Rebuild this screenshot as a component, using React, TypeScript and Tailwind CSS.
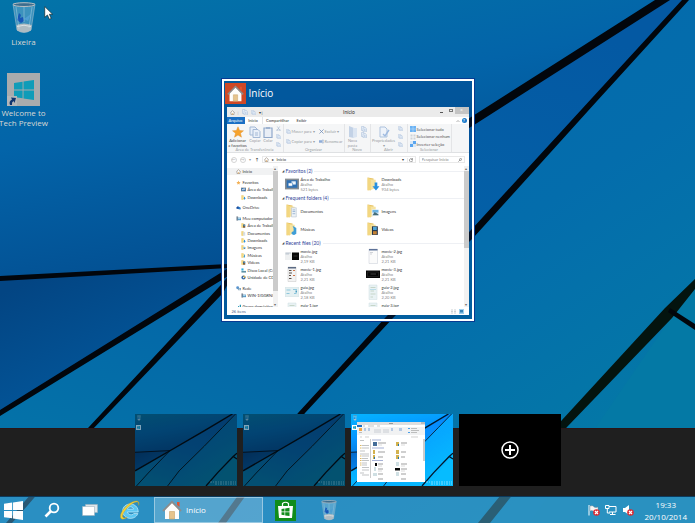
import { useId, useState } from 'react';
import type { ReactNode } from 'react';
import clsx from 'clsx';

type Kind = 'desktop' | 'downloads' | 'documents' | 'images' | 'music' | 'videos';

function Wallpaper({ className, thin }: { className?: string; thin?: boolean }) {
  const id = useId();
  return (
    <svg viewBox="0 0 695 523" preserveAspectRatio="none" aria-hidden="true" className={clsx('absolute inset-0 h-full w-full', className)}>
      <defs>
        <linearGradient id={`${id}a`} x1="0" y1="0" x2="0.45" y2="1">
          <stop offset="0" stopColor="#0374a8" />
          <stop offset="0.45" stopColor="#0364a9" />
          <stop offset="1" stopColor="#034c8e" />
        </linearGradient>
        <linearGradient id={`${id}b`} x1="0" y1="0.2" x2="0.6" y2="1">
          <stop offset="0" stopColor="#034583" />
          <stop offset="1" stopColor="#035ba0" />
        </linearGradient>
        <linearGradient id={`${id}c`} x1="0.7" y1="0" x2="0.3" y2="1">
          <stop offset="0" stopColor="#0459a3" />
          <stop offset="0.5" stopColor="#0462a8" />
          <stop offset="1" stopColor="#0474a8" />
        </linearGradient>
        <linearGradient id={`${id}d`} x1="0.2" y1="0" x2="0.8" y2="1">
          <stop offset="0" stopColor="#0468ac" />
          <stop offset="0.5" stopColor="#046dac" />
          <stop offset="1" stopColor="#047ba5" />
        </linearGradient>
      </defs>
      <path d="M0 0H665L222 275L0 278Z" fill={`url(#${id}a)`} />
      <path d="M0 278L235 264L0 414Z" fill={`url(#${id}b)`} />
      <path d="M0 414L238 264L665 0H685L301 413L227 523H0Z" fill={`url(#${id}c)`} />
      <path d="M685 0H695V523H222L301 413Z" fill={`url(#${id}d)`} />
      <path d="M695 283L530 523H695Z" fill="#0479a5" />
      {thin ? (
        <g fill="none" stroke="#03101c">
          <path d="M664 0L471 122L238 267L0 413" strokeWidth="10" />
          <path d="M685 0L594 100L472 234L301 413L222 523M0 278L238 266L90 429L10 523" strokeWidth="6" />
          <path d="M695 284L669 309L565 424L484 523M669 309L695 327" strokeWidth="9" />
        </g>
      ) : (
        <g fill="#02060c">
          <path d="M655 0H670L474 125L238 270L0 416V410L222 272L468 119Z" />
          <path d="M682 0H689L597 101L474 237L393 318L305 413L226 523H218L298 413L385 318L471 230L592 98Z" />
          <path d="M0 276L228 264V268L0 281Z" />
          <path d="M238 265L223 293L92 430L28 505L12 523H6L88 428L219 287Z" />
          <path d="M695 279V289L672 318L567 427L490 523H478L562 420L665 308Z" fill="#04140f" />
          <path d="M670 308L695 324V330L668 312Z" />
        </g>
      )}
    </svg>
  );
}

function RecycleBin({ className }: { className?: string }) {
  return (
    <svg viewBox="0 0 24 32" className={className} aria-hidden="true">
      <path d="M1 2L5 28Q12 33 19 28L23 2Z" fill="#a8cfe6" fillOpacity="0.35" stroke="#8fb4ca" strokeWidth="0.7" />
      <path d="M4.5 23Q12 20 19.7 23L19 28.5Q12 32.5 5 28.5Z" fill="#aebbc2" />
      <path d="M5 24.5Q12 22 19 24.5" stroke="#dde2e4" fill="none" />
      <path d="M7 11l2 2-1 3 3-1 1 4-3 2-4-3z" fill="#1757b8" />
      <path d="M12 17l7-5-3 7z" fill="#4f9fd2" />
      <path d="M4 5L7 27M20 5L17 26M12 5V20" stroke="#d3e7f0" strokeWidth="0.6" opacity="0.6" />
      <ellipse cx="12" cy="2.6" rx="11" ry="1.9" fill="#3d6e8f" stroke="#b9bfc2" />
    </svg>
  );
}

function WindowsLogo({ className }: { className?: string }) {
  return (
    <svg viewBox="0 0 20 20" className={className} fill="currentColor" aria-hidden="true">
      <path d="M0 3L8.6 1.7V9.5H0ZM9.5 1.5L20 0V9.5H9.5ZM0 10.4H8.6V18.2L0 17ZM9.5 10.4H20V20L9.5 18.4Z" />
    </svg>
  );
}

function House({ className }: { className?: string }) {
  return (
    <svg viewBox="0 0 20 20" className={className} aria-hidden="true">
      <path d="M15 2h2.5v5L15 5z" fill="#e4552e" />
      <path d="M3 9.5L10 2.5L17 9.5V19H3Z" fill="#fdfdfb" />
      <path d="M1 11L10 1.8L19 11" fill="none" stroke="#8c8c8c" strokeWidth="1.8" />
      <path d="M7.5 11.5H12.5V19H7.5Z" fill="#e6c48c" stroke="#c9a268" strokeWidth="0.6" />
    </svg>
  );
}

function HouseOutline({ className }: { className?: string }) {
  return (
    <svg viewBox="0 0 12 12" className={className} fill="#fff" stroke="#7b6a58" strokeWidth="1.2" aria-hidden="true">
      <path d="M1 6.5L6 1.5L11 6.5M2.5 6V11H9.5V6" />
      <path d="M5 11V7.5H7V11" fill="#e5a64f" stroke="none" />
    </svg>
  );
}

function FolderIcon({ kind, className }: { kind: Kind; className?: string }) {
  if (kind === 'desktop') {
    return (
      <svg viewBox="0 0 26 26" className={className} aria-hidden="true">
        <path d="M0 3H26V23H0Z" fill="#858c92" />
        <path d="M3 6H23V20H3Z" fill="#2e70b4" />
        <path d="M12 8H20V14H12Z" fill="#eef4fa" />
        <path d="M6 11H14V17H6Z" fill="#fff" stroke="#2e70b4" />
      </svg>
    );
  }
  return (
    <svg viewBox="0 0 26 26" className={className} aria-hidden="true">
      <path d="M3 1L14 3V22L3 25Z" fill="#e9c566" />
      <path d="M7 4L18 5V22L7 23Z" fill="#f6e3a0" />
      <path d="M3 1L9 4V25L3 24Z" fill="#f3d780" />
      {kind === 'downloads' && <path d="M16 10H21V17H25L18.5 25L12 17H16Z" fill="#2790e0" />}
      {kind === 'documents' && (
        <g>
          <path d="M12 7H21V24H12Z" fill="#eef3f8" stroke="#aebccb" />
          <path d="M14 11H19M14 14H19M14 18H19" stroke="#6089b7" />
        </g>
      )}
      {kind === 'images' && (
        <g>
          <path d="M11 10H24V22H11Z" fill="#e7f2fa" />
          <path d="M12 11H23V16H12Z" fill="#6cb3e2" />
          <path d="M12 21L16 15L23 19V21Z" fill="#456d7a" />
        </g>
      )}
      {kind === 'music' && <path d="M14 7L21 11V22L17 24Q12 24 12 20Q13 17 16 17V12Z" fill="#3f9dd6" />}
      {kind === 'videos' && (
        <g>
          <path d="M11 8H22V24H11Z" fill="#25344a" />
          <path d="M13 9H20V15H13Z" fill="#4fa5d7" />
          <path d="M13 17H20V23H13Z" fill="#c68233" />
        </g>
      )}
    </svg>
  );
}

function Thumb({ kind }: { kind: string }) {
  return (
    <svg viewBox="0 0 28 32" className="h-4 w-3.5" aria-hidden="true">
      {kind === 'wide' && (
        <g>
          <path d="M0 9H28V24H0Z" fill="#eef0f1" />
          <path d="M1 10H12M1 12H8" stroke="#8c9fb0" />
          <path d="M14 9H28V24H14Z" fill="#080808" />
          <path d="M17 16H25" stroke="#555" />
        </g>
      )}
      {kind === 'dark' && (
        <g>
          <path d="M0 9H28V24H0Z" fill="#060606" />
          <path d="M3 12H25V21H3Z" fill="none" stroke="#343434" />
          <path d="M9 16H20" stroke="#777" />
        </g>
      )}
      {kind === 'list' && (
        <g>
          <path d="M6 2H22V31H6Z" fill="#f3f3f3" stroke="#c4c4c4" />
          <path d="M6 2H22V5H6Z" fill="#5c6b84" />
          <path d="M8 9H13M8 14H14M8 19H12M8 25H13" stroke="#59504a" strokeWidth="2" />
          <path d="M16 9H20M16 19H20" stroke="#d0764a" strokeWidth="2" />
        </g>
      )}
      {kind === 'sheet' && (
        <g>
          <path d="M6 2H23V31H6Z" fill="#fbfbfb" stroke="#c4cad4" />
          <path d="M6 2H23V5H6Z" fill="#5d7298" />
          <path d="M8 9H14M8 12H12" stroke="#a5abb5" />
        </g>
      )}
      {kind === 'map' && (
        <g>
          <path d="M0 7H28V25H0Z" fill="#e4f0f2" stroke="#cbdcdf" />
          <path d="M3 12H11M3 19H9M16 11H24M18 19H23" stroke="#8fc7dc" strokeWidth="2" />
          <path d="M21 13H24V17H21Z" fill="#499dc2" />
        </g>
      )}
      {kind === 'page' && (
        <g>
          <path d="M6 2H22V31H6Z" fill="#e9f2f4" stroke="#cfdee2" />
          <path d="M9 7H19M9 14H16M9 20H19M9 26H14" stroke="#c6d6c9" strokeWidth="2" />
          <path d="M8 11H20" stroke="#8bc9dd" />
        </g>
      )}
    </svg>
  );
}

function PageGlyph({ className }: { className?: string }) {
  return (
    <svg viewBox="0 0 12 12" className={className} fill="#e9f0f9" stroke="#a3b9d6" aria-hidden="true">
      <path d="M1 1H6L8 3V9H1Z" />
      <path d="M4 3.5H9L11 5.5V11.5H4Z" />
      <path d="M6 7H9M6 9H9" />
    </svg>
  );
}

function SmallGlyph({ kind }: { kind: string }) {
  return (
    <svg viewBox="0 0 12 12" className="size-[5px] shrink-0" aria-hidden="true">
      {kind === 'star' && <path d="M6 1L7.5 4.5L11 5L8.5 7.5L9 11L6 9.3L3 11L3.5 7.5L1 5L4.5 4.5Z" fill="#f3b157" />}
      {kind === 'cloud' && (
        <g>
          <path d="M1 9V6L4 3L8 5L11 10Z" fill="#174b9d" />
          <path d="M6 4L11 6V10H6Z" fill="#2c7fcb" />
        </g>
      )}
      {kind === 'pc' && (
        <g>
          <path d="M1 1H5V11H1Z" fill="#7e8a96" />
          <path d="M4 4H12V10H4Z" fill="#3d83b8" />
          <path d="M5 5H11V8H5Z" fill="#b6e0f2" />
        </g>
      )}
      {kind === 'disk' && (
        <g>
          <path d="M1 1H6V6H1Z" fill="#2aaede" />
          <path d="M1 7H12V11H1Z" fill="#5f92a5" />
        </g>
      )}
      {kind === 'cd' && (
        <g>
          <circle cx="6" cy="6" r="5" fill="#3b6ba5" />
          <path d="M6 1A5 5 0 0 1 11 6H6Z" fill="#dfb445" />
          <circle cx="6" cy="6" r="1.5" fill="#fff" />
        </g>
      )}
      {kind === 'network' && (
        <g>
          <circle cx="4" cy="4" r="3.5" fill="#5894cf" />
          <path d="M5 5H12V10H5Z" fill="#5a7e9e" />
          <path d="M6 6H11V9H6Z" fill="#cae8f6" />
        </g>
      )}
      {kind === 'group' && <path d="M1 7H4V11H1ZM5 5H8V11H5ZM9 2H12V11H9Z" fill="#2695b5" />}
    </svg>
  );
}

const ribbonText = 'text-[#9a9ea3]';

function RibbonGroup({ label, width, children }: { label: string; width: string; children: ReactNode }) {
  return (
    <div className={clsx('flex shrink-0 flex-col justify-between border-r border-[#e4e5e7] pt-[2px]', width)}>
      <div className="flex h-[21px] items-start">{children}</div>
      <span className={clsx('text-center', ribbonText)}>{label}</span>
    </div>
  );
}

function RibbonStack({ children }: { children: ReactNode }) {
  return <div className="flex h-full w-2 flex-col items-center justify-between">{children}</div>;
}

function Ribbon() {
  return (
    <div className="flex h-[29px] overflow-hidden border-b border-[#dfe1e3] bg-[#f5f6f7] leading-[5px] whitespace-nowrap">
      <RibbonGroup label="Área de Transferência" width="w-[57px]">
        <button className="flex w-[22px] flex-col items-center text-[#444]">
          <svg viewBox="0 0 12 12" className="size-3" aria-hidden="true">
            <path d="M6 0.8L7.6 4.5L11.5 4.8L8.5 7.3L9.5 11.2L6 9.1L2.5 11.2L3.5 7.3L0.5 4.8L4.4 4.5Z" fill="#f6a32d" stroke="#df8826" strokeWidth="0.4" />
          </svg>
          Adicionar
          <br />a favoritos
        </button>
        <button className={clsx('flex w-[13px] flex-col items-center', ribbonText)}>
          <PageGlyph className="size-3" />
          Copiar
        </button>
        <button className={clsx('flex w-[13px] flex-col items-center', ribbonText)}>
          <svg viewBox="0 0 12 12" className="size-3" aria-hidden="true">
            <path d="M2 2H10V11.5H2Z" fill="#e9eef6" stroke="#91a9cb" strokeWidth="1.2" />
            <path d="M4 1H8V3H4Z" fill="#9eb3d0" />
          </svg>
          Colar
        </button>
        <RibbonStack>
          <button aria-label="Recortar">
            <svg viewBox="0 0 12 12" className="size-[5px]" stroke="#8ba3c4" fill="none">
              <path d="M3 1L8 9M9 1L4 9" />
              <circle cx="3" cy="10" r="1.5" />
              <circle cx="9" cy="10" r="1.5" />
            </svg>
          </button>
          <button aria-label="Copiar caminho"><PageGlyph className="size-[5px]" /></button>
          <button aria-label="Colar atalho"><PageGlyph className="size-[5px]" /></button>
        </RibbonStack>
      </RibbonGroup>
      <RibbonGroup label="Organizar" width="w-[61px]">
        <div className={clsx('grid h-full w-full grid-cols-[33px_1fr] items-center pl-[2px]', ribbonText)}>
          <button className="flex items-center gap-px"><PageGlyph className="size-[5px]" />Mover para ▾</button>
          <button className="flex items-center gap-px">
            <svg viewBox="0 0 12 12" className="size-[5px]" stroke="#6f8cb5" strokeWidth="1.8" aria-hidden="true"><path d="M1 1L11 11M11 1L1 11" /></svg>
            Excluir ▾
          </button>
          <button className="flex items-center gap-px"><PageGlyph className="size-[5px]" />Copiar para ▾</button>
          <button className="flex items-center gap-px">
            <svg viewBox="0 0 12 12" className="size-[5px]" aria-hidden="true"><path d="M0 3H8V9H0Z" fill="#8eacd8" /><path d="M8 3H12V9H8M9 1V11" fill="none" stroke="#8ba3c4" /></svg>
            Renomear
          </button>
        </div>
      </RibbonGroup>
      <RibbonGroup label="Novo" width="w-[26px]">
        <button className={clsx('flex w-4 flex-col items-center', ribbonText)}>
          <svg viewBox="0 0 12 12" className="size-3" aria-hidden="true"><path d="M2 0L7 2V12L2 11Z" fill="#c3d2e6" /><path d="M6 2H10V11L6 12Z" fill="#dbe5f2" /></svg>
          Nova
          <br />pasta
        </button>
        <div className="flex h-3 flex-col justify-between">
          <button aria-label="Novo item"><PageGlyph className="size-[6px]" /></button>
          <button aria-label="Acesso fácil"><PageGlyph className="size-[6px]" /></button>
        </div>
      </RibbonGroup>
      <RibbonGroup label="Abrir" width="w-[37px]">
        <button className={clsx('flex w-[26px] flex-col items-center', ribbonText)}>
          <svg viewBox="0 0 12 12" className="size-3" aria-hidden="true"><path d="M2 1H7L9 3V11H2Z" fill="#eef3fa" stroke="#adc3de" /><path d="M5 8L7 10L11 4" fill="none" stroke="#9ebae0" strokeWidth="1.4" /></svg>
          Propriedades
          <span>▾</span>
        </button>
        <RibbonStack>
          <button aria-label="Abrir"><PageGlyph className="size-[5px]" /></button>
          <button aria-label="Editar"><PageGlyph className="size-[5px]" /></button>
          <button aria-label="Histórico"><PageGlyph className="size-[5px]" /></button>
        </RibbonStack>
      </RibbonGroup>
      <RibbonGroup label="Selecionar" width="w-[44px]">
        <div className="flex h-full flex-col justify-between pl-[2px] text-[#555]">
          <button className="flex items-center gap-px">
            <svg viewBox="0 0 12 12" className="size-[6px]" aria-hidden="true"><path d="M0 0H12V12H0Z" fill="#6bb2f4" /><path d="M6 0V12M0 6H12" stroke="#c7e2fb" /></svg>
            Selecionar tudo
          </button>
          <button className="flex items-center gap-px">
            <svg viewBox="0 0 12 12" className="size-[6px]" fill="#cdd2d8" aria-hidden="true"><path d="M1 1H5V5H1ZM7 1H11V5H7ZM1 7H5V11H1ZM7 7H11V11H7Z" /></svg>
            Selecionar nenhum
          </button>
          <button className="flex items-center gap-px">
            <svg viewBox="0 0 12 12" className="size-[6px]" aria-hidden="true"><path d="M6 0H12V6H6ZM0 6H6V12H0Z" fill="#5aa6ef" /><path d="M0 0H6V6H0ZM6 6H12V12H6Z" fill="#d9e7f4" /></svg>
            Inverter seleção
          </button>
        </div>
      </RibbonGroup>
    </div>
  );
}

const navItems: { label: string; icon: ReactNode; level: number; first?: boolean; active?: boolean }[] = [
  { label: 'Início', icon: <HouseOutline className="size-[5px] shrink-0" />, level: 0, active: true },
  { label: 'Favoritos', icon: <SmallGlyph kind="star" />, level: 0, first: true },
  { label: 'Área de Trabalho', icon: <FolderIcon kind="desktop" className="size-[5px] shrink-0" />, level: 1 },
  { label: 'Downloads', icon: <FolderIcon kind="downloads" className="size-[5px] shrink-0" />, level: 1 },
  { label: 'OneDrive', icon: <SmallGlyph kind="cloud" />, level: 0, first: true },
  { label: 'Meu computador', icon: <SmallGlyph kind="pc" />, level: 0, first: true },
  { label: 'Área de Trabalho', icon: <FolderIcon kind="videos" className="size-[5px] shrink-0" />, level: 1 },
  { label: 'Documentos', icon: <FolderIcon kind="documents" className="size-[5px] shrink-0" />, level: 1 },
  { label: 'Downloads', icon: <FolderIcon kind="downloads" className="size-[5px] shrink-0" />, level: 1 },
  { label: 'Imagens', icon: <FolderIcon kind="images" className="size-[5px] shrink-0" />, level: 1 },
  { label: 'Músicas', icon: <FolderIcon kind="music" className="size-[5px] shrink-0" />, level: 1 },
  { label: 'Vídeos', icon: <FolderIcon kind="videos" className="size-[5px] shrink-0" />, level: 1 },
  { label: 'Disco Local (C:)', icon: <SmallGlyph kind="disk" />, level: 1 },
  { label: 'Unidade de CD', icon: <SmallGlyph kind="cd" />, level: 1 },
  { label: 'Rede', icon: <SmallGlyph kind="network" />, level: 0, first: true },
  { label: 'WIN-1IGGRNI', icon: <SmallGlyph kind="pc" />, level: 1 },
  { label: 'Grupo doméstico', icon: <SmallGlyph kind="group" />, level: 0, first: true },
];

const sections: { title: string; items: { name: string; size?: string; icon: ReactNode }[] }[] = [
  {
    title: 'Favoritos (2)',
    items: [
      { name: 'Área de Trabalho', size: '521 bytes', icon: <FolderIcon kind="desktop" className="size-3.5" /> },
      { name: 'Downloads', size: '934 bytes', icon: <FolderIcon kind="downloads" className="size-3.5" /> },
    ],
  },
  {
    title: 'Frequent folders (4)',
    items: [
      { name: 'Documentos', icon: <FolderIcon kind="documents" className="size-3.5" /> },
      { name: 'Imagens', icon: <FolderIcon kind="images" className="size-3.5" /> },
      { name: 'Músicas', icon: <FolderIcon kind="music" className="size-3.5" /> },
      { name: 'Vídeos', icon: <FolderIcon kind="videos" className="size-3.5" /> },
    ],
  },
  {
    title: 'Recent files (20)',
    items: [
      { name: 'movie.jpg', size: '2,19 KB', icon: <Thumb kind="wide" /> },
      { name: 'movie-2.jpg', size: '2,21 KB', icon: <Thumb kind="sheet" /> },
      { name: 'movie-1.jpg', size: '2,21 KB', icon: <Thumb kind="list" /> },
      { name: 'movie-3.jpg', size: '2,21 KB', icon: <Thumb kind="dark" /> },
      { name: 'guia.jpg', size: '2,18 KB', icon: <Thumb kind="map" /> },
      { name: 'guia-2.jpg', size: '2,20 KB', icon: <Thumb kind="page" /> },
      { name: 'guia-1.jpg', size: '2,18 KB', icon: <Thumb kind="page" /> },
      { name: 'guia-3.jpg', size: '2,20 KB', icon: <Thumb kind="page" /> },
    ],
  },
];

function ScrollBar({ thumb }: { thumb: string }) {
  return (
    <div className="flex w-[5px] shrink-0 flex-col items-center bg-[#f2f2f2] leading-[5px] text-[#666]" aria-hidden="true">
      <span>▴</span>
      <div className={clsx('w-full bg-[#cbcbcb]', thumb)} />
      <span className="mt-auto">▾</span>
    </div>
  );
}

function ExplorerWindow() {
  const [query, setQuery] = useState('');

  return (
    <div className="bg-white font-['Lato','Open_Sans',sans-serif] text-[4px] leading-[5px] text-[#333]">
      <div className="flex h-2.5 items-center bg-[#ebebeb] pl-[3px]">
        <div className="flex w-20 items-center gap-[3px]">
          <HouseOutline className="size-[5px]" />
          <span className="text-[#aaa]">|</span>
          <PageGlyph className="size-[6px]" />
          <PageGlyph className="size-[5px]" />
          <span>▾ |</span>
        </div>
        <h2 className="flex-1 text-center text-[5px]">Início</h2>
        <div className="flex h-full w-20 items-start justify-end">
          <button aria-label="Minimizar" className="flex h-[7px] w-2.5 items-center justify-center">
            <span className="mt-1 h-px w-[3px] bg-[#555]" />
          </button>
          <button aria-label="Maximizar" className="flex h-[7px] w-2 items-center justify-center">
            <span className="h-[3px] w-1 border border-[#777]" />
          </button>
          <button aria-label="Fechar" className="flex h-[7px] w-3.5 items-center justify-center bg-[#c4c4c4] text-[5px] text-white">×</button>
        </div>
      </div>
      <div className="flex h-[7px] items-center">
        <button className="h-full w-[18px] bg-[#1a6fc4] text-white">Arquivo</button>
        <button className="h-full w-[18px] border-r border-[#e4e5e7]">Início</button>
        <button className="h-full w-[30px]">Compartilhar</button>
        <button className="h-full w-[18px]">Exibir</button>
        <button aria-label="Recolher faixa" className="ml-auto text-[#666]">
          <svg viewBox="0 0 8 8" className="size-1" fill="none" stroke="currentColor"><path d="M1 6L4 3L7 6" /></svg>
        </button>
        <button aria-label="Ajuda" className="mx-[2px] flex size-[5px] items-center justify-center rounded-full bg-[#1979ca] font-bold text-white">?</button>
      </div>
      <Ribbon />
      <div className="flex h-[13px] items-center gap-[3px] px-1">
        <button aria-label="Voltar" className="flex size-[6px] items-center justify-center rounded-full border border-[#d5d5d5] text-[#bbb]">←</button>
        <button aria-label="Avançar" className="flex size-[6px] items-center justify-center rounded-full border border-[#d5d5d5] text-[#bbb]">→</button>
        <span className="w-1 text-[#999]">▾</span>
        <button aria-label="Acima" className="font-bold">↑</button>
        <div className="flex h-[7px] flex-1 items-center gap-[3px] border border-[#e9e9e9] pl-px">
          <HouseOutline className="size-[5px]" />
          <span>▸</span>
          <span>Início</span>
          <span className="ml-auto">▾</span>
          <button aria-label="Atualizar" className="flex w-2 justify-center border-l border-[#e9e9e9]">
            <svg viewBox="0 0 10 10" className="size-1" fill="none" stroke="#666" strokeWidth="1.5"><path d="M8 3A4 4 0 1 0 9 6M9 0V4H5" /></svg>
          </button>
        </div>
        <label className="flex h-[7px] w-[46px] items-center border border-[#e9e9e9] px-[2px]">
          <input
            type="text"
            aria-label="Pesquisar Início"
            placeholder="Pesquisar Início"
            value={query}
            onChange={(e) => setQuery(e.target.value)}
            className="h-[5px] w-full min-w-0 leading-[5px] placeholder:text-[#888] focus:outline-none"
          />
          <svg viewBox="0 0 10 10" className="size-1 shrink-0" fill="none" stroke="#666" strokeWidth="1.5" aria-hidden="true"><circle cx="6.5" cy="3.5" r="2.5" /><path d="M5 5L1 9" /></svg>
        </label>
      </div>
      <div className="flex h-[141px] overflow-hidden">
        <nav className="min-w-0 flex-1 overflow-hidden whitespace-nowrap">
          <ul className="flex h-[144px] flex-col pt-[2px]">
            {navItems.map((item, i) => (
              <li key={i} className={clsx('flex min-h-0 flex-1 items-center', item.first && 'mt-[3px]', item.active && 'bg-[#f1f2f3]')}>
                <a href="#" className={clsx('flex items-center gap-[2px]', item.level ? 'pl-3.5' : 'pl-[9px]')}>
                  {item.icon}
                  {item.label}
                </a>
              </li>
            ))}
          </ul>
        </nav>
        <ScrollBar thumb="h-[120px]" />
        <div className="w-[186px] shrink-0 pt-px pl-1">
          {sections.map((section) => (
            <section key={section.title} className="mb-px">
              <h3 className="flex h-2 items-center gap-px text-[5px] text-[#2f4699]">
                <span className="w-[3px] text-[3px] text-[#444]">◢</span>
                {section.title}
                <span className="ml-px h-px flex-1 bg-[#eef0f4]" />
              </h3>
              <ul className="grid grid-cols-[81px_1fr] pl-[3px]">
                {section.items.map((item) => (
                  <li key={item.name} className="flex h-[18px] items-center gap-[2px]">
                    {item.icon}
                    <div>
                      <p>{item.name}</p>
                      {item.size && <p className="text-[#888]">Atalho</p>}
                      {item.size && <p className="text-[#888]">{item.size}</p>}
                    </div>
                  </li>
                ))}
              </ul>
            </section>
          ))}
        </div>
        <ScrollBar thumb="h-[77px]" />
      </div>
      <div className="flex h-2 items-center gap-[3px] px-[5px] text-[#4b5f86]">
        <span className="mr-auto">26 itens</span>
        <svg viewBox="0 0 10 10" className="size-[5px]" stroke="#9aa4ad" aria-hidden="true"><path d="M0 2H4M6 2H10M0 5H4M6 5H10M0 8H4M6 8H10" /></svg>
        <svg viewBox="0 0 10 10" className="size-[5px]" aria-hidden="true"><path d="M0 0H10V10H0Z" fill="#9fd1ee" /><path d="M2 2H8V7H2Z" fill="#3a85b8" /></svg>
      </div>
    </div>
  );
}

// Simplified drawing of the open window, used inside a desktop thumbnail
function MiniWindow() {
  return (
    <svg viewBox="0 0 68 60" className="h-[60px] w-[68px]" aria-hidden="true">
      <path d="M0 0H68V60H0Z" fill="#fff" />
      <path d="M0 0H68V3H0Z" fill="#dedede" />
      <path d="M32 1.5H36" stroke="#999" />
      <path d="M64 0H68V2H64Z" fill="#bbb" />
      <path d="M0 3H5V5H0Z" fill="#1a6fc4" />
      <path d="M6 4H8M11 4H17M20 4H23" stroke="#aaa" strokeWidth="0.7" />
      <path d="M0 5H68V13H0Z" fill="#f1f2f3" />
      <path d="M2 6H5V9H2Z" fill="#f2a747" />
      <path d="M7 6H9V9H7ZM11 6H13V9H11ZM34 6H36V9H34ZM42 6H45V9H42Z" fill="#b5c9e4" />
      <path d="M17 8H24M17 10H24M26 8H32M26 10H32" stroke="#c0c4ca" strokeWidth="0.8" />
      <path d="M51 6.5H53M51 10.5H53" stroke="#4a9fe8" />
      <path d="M54 6.5H60M54 8.5H62M54 10.5H60M2 10.5H5" stroke="#999" strokeWidth="0.6" />
      <path d="M3 15H5M8 15H12M54 15H61" stroke="#bbb" strokeWidth="0.7" />
      <path d="M13 17H14V56H13ZM66 17H68V39H66Z" fill="#ccc" />
      <path d="M3 18.5H7M5 23.5H12M5 26H12M3 29H8M3 32H12M5 34H12M5 36.5H11M5 38.5H12M5 41H10M5 43H10M5 45.5H12M5 48H12M3 51H7M5 53H12" stroke="#a6aaae" strokeWidth="0.7" />
      <path d="M3 23.5H4.5M3 26H4.5M3 34H4.5M3 36.5H4.5M3 38.5H4.5M3 41H4.5M3 43H4.5" stroke="#dcb863" />
      <path d="M15 18H24M15 26H27M15 38.5H26" stroke="#7f8fc4" strokeWidth="0.7" />
      <path d="M16 20H20V24H16Z" fill="#436c98" />
      <path d="M39 20H42V24H39ZM16 28H18V32H16ZM39 28H42V32H39ZM16 33H18V37H16ZM39 33H42V37H39Z" fill="#d3b24f" />
      <path d="M41 22H42V24H41ZM17 35H18V37H17ZM41 35H42V37H41Z" fill="#2575ad" />
      <path d="M21 21H29M44 21H50M21 30H28M44 30H49M21 35H26M44 35H48M21 42H26M44 42H50M21 47H26M44 47H50M21 52H26M44 52H49M21 57H26M44 57H49" stroke="#777" strokeWidth="0.7" />
      <path d="M21 23H25M44 23H48M21 44H25M44 44H48M21 49H25M44 49H48" stroke="#ccc" strokeWidth="0.7" />
      <path d="M18 41H20V44H18ZM38 46H43V48.5H38Z" fill="#0a0a0a" />
      <path d="M17 45H19V49H17ZM39 40H42V44H39ZM16 51H20V54H16ZM39 50H42V54H39Z" fill="#cfdfe3" />
    </svg>
  );
}

function DesktopThumb({ name, current }: { name: string; current?: boolean }) {
  return (
    <button aria-label={name} className="relative h-18 w-[102px] overflow-hidden">
      <Wallpaper thin className={current ? 'brightness-[1.55]' : 'brightness-[.68]'} />
      <div className={clsx('absolute top-px left-px flex w-1.5 flex-col items-center gap-1', !current && 'opacity-50')}>
        <RecycleBin className="h-1.5 w-1" />
        <WindowsLogo className="size-[5px] bg-white p-px text-[#19a3c7]" />
      </div>
      {current && (
        <div className="absolute inset-x-0 top-2 flex pl-1.5">
          <MiniWindow />
        </div>
      )}
      <svg viewBox="0 0 26 4" className="absolute right-px bottom-px w-[26px]" stroke="#fff" strokeDasharray="2 1 1 1" strokeWidth="0.8" opacity={current ? 0.6 : 0.3} aria-hidden="true">
        <path d="M0 1H26M5 3H26" />
      </svg>
    </button>
  );
}

function InternetExplorer() {
  return (
    <svg viewBox="0 0 24 24" className="size-[22px]" aria-hidden="true">
      <path d="M21 14.2H9.2C9.5 17.3 14.5 18.3 16 15.9H20.6C17.5 24 4 22.5 4 13C4 3 21 2.5 21 14.2ZM9.2 11H15.8C15.3 7.9 9.9 7.7 9.2 11Z" fill="#5cc7f2" stroke="#d4f1fc" strokeWidth="0.7" />
      <path d="M21.5 7C23.5 1 17.5 0.5 10.5 5.5C3.5 11 -0.5 19 2.5 21.5C4 22.8 7 21.5 9 20C5 21.3 3.5 20.5 4 17.5C5 12.5 16 1.5 20.5 3.5C21.7 4.2 21.5 6 21.5 7Z" fill="#f7d236" stroke="#b99424" strokeWidth="0.4" />
    </svg>
  );
}

function StoreIcon() {
  return (
    <svg viewBox="0 0 21 21" className="size-[21px]" aria-hidden="true">
      <path d="M0 0H21V21H0Z" fill="#118c1b" />
      <path d="M7.5 6.5V3.5Q10.5 1 13.5 3.5V6.5" fill="none" stroke="#fff" strokeWidth="1.2" />
      <path d="M3 6H18L17 18H4Z" fill="#fff" />
      <path d="M6.5 9L9.5 8.5V11.5H6.5ZM10.2 8.4L14.5 7.8V11.5H10.2ZM6.5 12.2H9.5V15.3L6.5 14.8ZM10.2 12.2H14.5V16L10.2 15.4Z" fill="#118c1b" />
    </svg>
  );
}

function RedBadge() {
  return (
    <g>
      <circle cx="8.5" cy="8.5" r="3.3" fill="#db2b32" />
      <path d="M7 7L10 10M10 7L7 10" stroke="#fff" strokeWidth="1.2" />
    </g>
  );
}

function Taskbar() {
  return (
    <footer className="relative flex h-[27px] items-stretch border-t border-[#0c3b5e] bg-[#50aadc]/50 text-[8px] text-white">
      <button aria-label="Iniciar" className="flex w-8 items-center pl-1">
        <WindowsLogo className="size-[19px]" />
      </button>
      <button aria-label="Pesquisar" className="flex w-10 items-center justify-center">
        <svg viewBox="0 0 16 16" className="size-4" fill="none" stroke="#fff" aria-hidden="true">
          <circle cx="10" cy="6" r="4.3" strokeWidth="1.8" />
          <path d="M7 9L1.5 14.5" strokeWidth="2.6" />
        </svg>
      </button>
      <button aria-label="Visão de tarefas" className="flex w-9 items-center justify-center">
        <svg viewBox="0 0 16 12" className="w-4" aria-hidden="true">
          <path d="M3.5 0.5H15.5V8.5H3.5Z" fill="#dfe6ea" stroke="#9fb4c0" strokeWidth="0.6" />
          <path d="M0.5 2.5H12.5V11.5H0.5Z" fill="#fff" stroke="#9fb4c0" strokeWidth="0.6" />
        </svg>
      </button>
      <button aria-label="Internet Explorer" className="flex w-11 items-center justify-center">
        <InternetExplorer />
      </button>
      <button className="ml-0.5 flex w-[109px] items-center gap-1 border border-white/40 bg-white/20 pl-[7px]">
        <House className="size-5" />
        Início
      </button>
      <button aria-label="Loja" className="flex w-11 items-center justify-center">
        <StoreIcon />
      </button>
      <button aria-label="Lixeira" className="flex w-11 items-center justify-center">
        <RecycleBin className="h-[21px] w-[18px]" />
      </button>
      <div className="ml-auto flex items-center gap-[5px] pr-2">
        <svg viewBox="0 0 12 12" className="size-3" aria-label="Central de Ações">
          <path d="M1 1V11.5" stroke="#fff" />
          <path d="M2 2Q5 1 6 3Q8 4 10 3V8Q7 9 5 7Q4 6 2 7Z" fill="#f5f5f5" stroke="#76828a" strokeWidth="0.4" />
          <RedBadge />
        </svg>
        <svg viewBox="0 0 12 12" className="size-3" fill="none" stroke="#fff" aria-label="Rede">
          <path d="M4 2.5H11V8H4" />
          <path d="M7.5 8V10.5M5 10.5H10.5M0.5 1.5H4V4.5H0.5ZM2.3 4.5V9H5" />
        </svg>
        <svg viewBox="0 0 12 12" className="size-3" aria-label="Volume">
          <path d="M1 4H3L7 1V11L3 8H1Z" fill="#fff" />
          <RedBadge />
        </svg>
        <time dateTime="2014-10-20T19:33" className="ml-1.5 pt-px text-center leading-3">
          19:33
          <br />
          20/10/2014
        </time>
      </div>
    </footer>
  );
}

export default function App() {
  return (
    <div className="relative flex min-h-screen flex-col overflow-hidden bg-[#0467a8] font-['Open_Sans','Noto_Sans',sans-serif]">
      <Wallpaper />
      <main className="relative flex flex-1 flex-col items-center pt-[79px] pb-8">
        <div className="absolute top-0.5 left-0 flex w-[47px] flex-col gap-[26px] text-[8px] leading-2.5 whitespace-nowrap text-[#d8d8d4] [text-shadow:1px_1px_1px_#000,0_0_2px_#000]">
          <button className="flex flex-col items-center gap-[3px]">
            <RecycleBin className="h-8 w-6" />
            Lixeira
          </button>
          <button className="flex flex-col items-center gap-[2px]">
            <span className="relative flex size-[33px] items-center justify-center bg-[#a9abad]">
              <WindowsLogo className="size-5 text-[#109cb8]" />
              <svg viewBox="0 0 10 10" className="absolute bottom-0 left-0 size-[10px]" aria-hidden="true">
                <path d="M0 0H10V10H0Z" fill="#b4b6b8" />
                <path d="M3 9Q1.5 5 5 3.5L4 1.5L9 2L7.5 7L6.5 5Q4.5 6 5 9Z" fill="#10356f" />
              </svg>
            </span>
            <span>
              Welcome to
              <br />
              Tech Preview
            </span>
          </button>
        </div>
        <svg viewBox="0 0 8 13" className="absolute top-[6px] left-11 h-[14px] w-[9px]" aria-hidden="true">
          <path d="M0.5 0.5V10.5L3 8.3L4.8 12.3L6.5 11.5L4.8 7.7H7.8Z" fill="#fff" stroke="#122" strokeWidth="0.6" />
        </svg>
        <article className="w-[252px] border-2 border-white bg-[#00347a]/25 px-[3px] pt-0.5 pb-1 ring-1 ring-[#073a92]">
          <header className="-ml-[2px] flex items-center gap-[3px] pb-[3px]">
            <span className="flex size-[21px] items-center justify-center bg-[#cf4825]">
              <House className="size-[17px]" />
            </span>
            <h1 className="text-[10px] text-white">Início</h1>
          </header>
          <ExplorerWindow />
        </article>
      </main>
      <section aria-label="Áreas de trabalho" className="relative flex justify-center border-t border-[#2b1517] bg-[#1f1f1f] pb-2.5">
        <div className="-mt-[15px] flex gap-[6px]">
          <DesktopThumb name="Área de trabalho 1" />
          <DesktopThumb name="Área de trabalho 2" />
          <DesktopThumb name="Área de trabalho 3" current />
          <button aria-label="Adicionar área de trabalho" className="flex h-18 w-[102px] items-center justify-center bg-black">
            <svg viewBox="0 0 18 18" className="size-[18px]" fill="none" stroke="#fff" aria-hidden="true">
              <circle cx="9" cy="9" r="8" strokeWidth="1.5" />
              <path d="M9 4V14M4 9H14" strokeWidth="2" />
            </svg>
          </button>
        </div>
      </section>
      <Taskbar />
    </div>
  );
}
